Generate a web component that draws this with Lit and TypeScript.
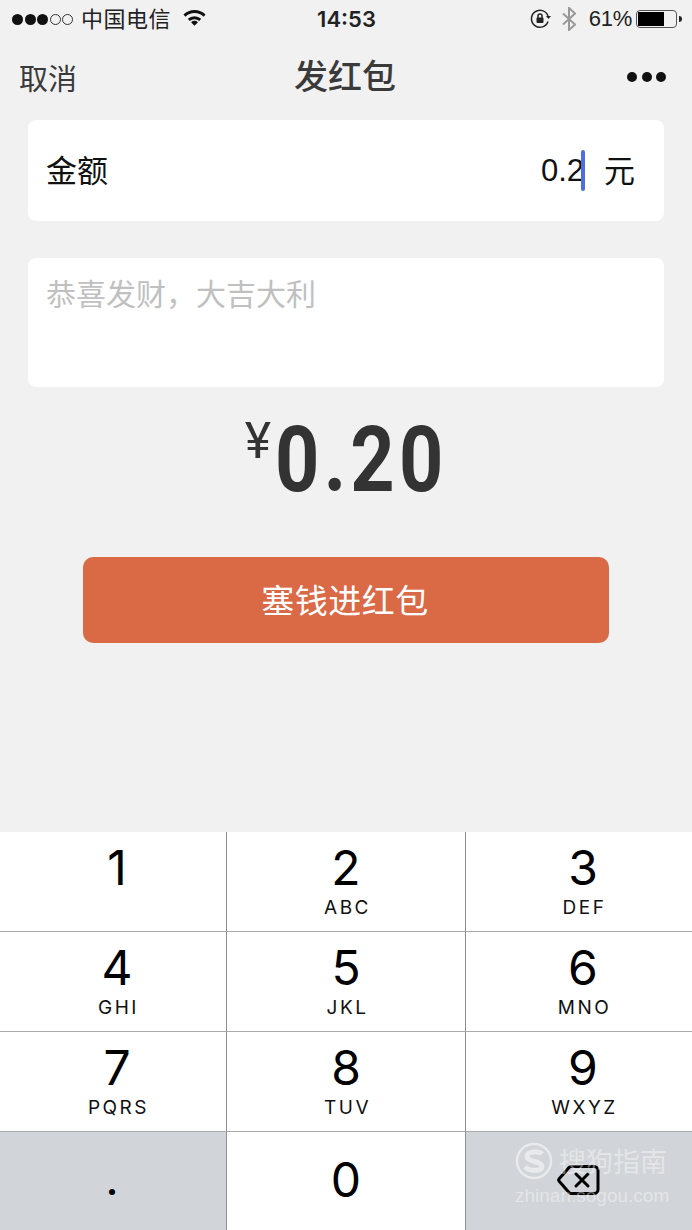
import { LitElement, css, html } from 'lit';
import { customElement } from 'lit/decorators.js';

const KEYS = [
	['1', ''], ['2', 'ABC'], ['3', 'DEF'],
	['4', 'GHI'], ['5', 'JKL'], ['6', 'MNO'],
	['7', 'PQRS'], ['8', 'TUV'], ['9', 'WXYZ'],
];

@customElement('app-root')
export class AppRoot extends LitElement {
	static styles = css`
		:host {
			display: flex;
			flex-direction: column;
			position: relative;
			width: 692px;
			height: 1230px;
			overflow: hidden;
			background: #f1f1f2;
			color: #000;
			font-family: "Liberation Sans", "Noto Sans CJK SC", sans-serif;
		}
		.status {
			display: flex;
			align-items: center;
			height: 38px;
			padding: 0 10px 0 12px;
			font-size: 23px;
			color: #222;
			position: relative;
		}
		.dots { display: flex; gap: 1.500px; margin-right: 8px; }
		.dot { width: 11px; height: 11px; border-radius: 50%; background: #111; box-sizing: border-box; }
		.dot.off { background: none; border: 1px solid #333; }
		.carrier { font-family: "Noto Sans CJK SC", sans-serif; font-size: 22px; letter-spacing: 0.5px; margin: 0 12px 4px 0; }
		.wifi { margin-bottom: 2px; }
		.time { position: absolute; left: 0; right: 0; text-align: center; font-family: Inter, sans-serif; font-weight: 600; font-size: 22px; padding-left: 1px; }
		.status-right { margin-left: auto; display: flex; align-items: center; gap: 10px; }
		.pct { font-size: 22px; margin: 0 -6px 0 3px; letter-spacing: -0.3px; }
		.nav {
			display: flex;
			align-items: center;
			justify-content: space-between;
			height: 82px;
			padding: 0 26px 4px 19px;
			box-sizing: border-box;
			position: relative;
			font-family: "Noto Sans CJK SC", sans-serif;
			color: #3a3a3a;
		}
		.cancel { font-size: 29px; }
		.title { position: absolute; left: 0; right: 2px; top: 12px; text-align: center; font-size: 34px; font-weight: 500; line-height: 50px; }
		.more { display: flex; gap: 4.500px; }
		.more i { width: 10px; height: 10px; border-radius: 50%; background: #111; }
		.content { display: flex; flex-direction: column; padding: 0 28px; font-family: "Noto Sans CJK SC", sans-serif; }
		.card { background: #fff; border-radius: 8px; }
		.amount-row {
			display: flex;
			align-items: center;
			height: 101px;
			padding: 0 29px 4px 18px;
			box-sizing: border-box;
			font-size: 31px;
			color: #111;
		}
		.value { margin-left: auto; display: flex; align-items: center; margin-bottom: -4px; font-family: "Liberation Sans", sans-serif; font-size: 31px; }
		.caret { width: 4px; height: 41px; border-radius: 2px; background: #4f6fdc; margin: 0 19px 0 -3px; }
		.memo {
			height: 129px;
			margin-top: 37px;
			padding: 12px 18px;
			box-sizing: border-box;
			font-size: 30px;
			line-height: 44px;
			color: #c0c0c0;
		}
		.total {
			display: flex;
			justify-content: center;
			margin-top: 24px;
			height: 98px;
			padding-right: 6px;
			color: #333;
			font-family: Roboto, sans-serif;
			font-weight: 700;
		}
		.yen { font-size: 50px; line-height: 60px; font-weight: 400; margin-right: 4px; }
		.sum { font-size: 91px; line-height: 99px; letter-spacing: 5px; transform: scaleX(0.85); transform-origin: left; width: 166px; }
		.pay {
			align-self: center;
			width: 526px;
			height: 86px;
			margin-top: 48px;
			padding: 0 2px 2px 0;
			box-sizing: border-box;
			border-radius: 10px;
			background: #da6946;
			color: #fff;
			display: flex;
			align-items: center;
			justify-content: center;
			font-size: 33px;
			letter-spacing: 0.5px;
		}
		.pad {
			margin-top: auto;
			display: grid;
			grid-template-columns: 227px 239px 226px;
			grid-template-rows: 99px 100px 100px 99px;
			background: #fff;
		}
		.key {
			display: flex;
			flex-direction: column;
			align-items: center;
			border-top: 1px solid #a9abac;
			border-right: 1px solid #8f9092;
			box-sizing: border-box;
			font-family: Inter, sans-serif;
			color: #000;
		}
		.key:nth-child(-n+3) { border-top: 0; }
		.key:nth-child(3n) { border-right: 0; }
		.key:nth-child(3n+1), .key:nth-child(3n) { padding-left: 8px; }
		.num { font-size: 48px; line-height: 56px; margin-top: 8px; }
		.letters { font-size: 19px; line-height: 22px; letter-spacing: 2.500px; margin: 1px 0 0 3px; color: #111; }
		.grey { background: #d1d4d8; }
		.key.dotkey { justify-content: center; font-size: 36px; font-weight: 700; padding: 2px 2px 0 0; }
		.zero { justify-content: center; padding-bottom: 2px; }
		.zero .num { margin-top: 0; }
		.key.back { justify-content: center; padding: 0; }
		.back svg { margin: 0 0 2px -2px; }
		.mark {
			position: absolute;
			left: 515px;
			top: 1141px;
			color: rgba(255, 255, 255, 0.42);
			font-family: "Noto Sans CJK SC", sans-serif;
		}
		.mark-top { display: flex; align-items: center; gap: 6px; font-size: 27px; line-height: 40px; }
		.mark-url { font-family: "Liberation Sans", sans-serif; font-size: 19px; line-height: 20px; margin-top: 5px; }
	`;

	render() {
		return html`
			<div class="status">
				<div class="dots">
					<i class="dot"></i><i class="dot"></i><i class="dot"></i><i class="dot off"></i><i class="dot off"></i>
				</div>
				<span class="carrier">中国电信</span>
				<svg class="wifi" width="23" height="18" viewBox="0 0 24 18" fill="none" stroke="#111" stroke-width="3">
					<path d="M1.500 6.500a15 15 0 0 1 21 0"/>
					<path d="M6 11a9 9 0 0 1 12 0"/>
					<path d="M12 17l-3.600-3.600a5 5 0 0 1 7.200 0z" fill="#111" stroke="none"/>
				</svg>
				<span class="time">14:53</span>
				<div class="status-right">
					<svg width="22" height="20" viewBox="0 0 22 20" fill="none" stroke="#222" stroke-width="1.500">
						<path d="M18 12.500A8.500 8.500 0 1 1 18 7"/>
						<path d="M16 7h5l-2.500 3z" fill="#222" stroke="none"/>
						<rect x="6.500" y="8.500" width="7" height="5.500" rx="1" fill="#222" stroke="none"/>
						<path d="M8 9V7a2 2 0 0 1 4 0v2"/>
					</svg>
					<svg width="14" height="24" viewBox="0 0 14 24" fill="none" stroke="#999" stroke-width="2">
						<path d="M1 6.500l12 11-6 5.500V1l6 5.500-12 11"/>
					</svg>
					<span class="pct">61%</span>
					<svg width="46" height="20" viewBox="0 0 46 20">
						<rect x="0.500" y="1.500" width="40" height="17" rx="3.500" fill="none" stroke="#555"/>
						<rect x="2" y="3" width="26" height="14" fill="#000"/>
						<path d="M43 7a3 3 0 0 1 0 6z" fill="#222"/>
					</svg>
				</div>
			</div>
			<div class="nav">
				<span class="cancel">取消</span>
				<span class="title">发红包</span>
				<span class="more"><i></i><i></i><i></i></span>
			</div>
			<div class="content">
				<div class="card amount-row">
					<span>金额</span>
					<span class="value">0.2<i class="caret"></i></span>
					<span>元</span>
				</div>
				<div class="card memo">恭喜发财，大吉大利</div>
				<div class="total">
					<span class="yen">¥</span>
					<span class="sum">0.20</span>
				</div>
				<div class="pay">塞钱进红包</div>
			</div>
			<div class="pad">
				${KEYS.map(([n, l]) => html`
					<div class="key"><span class="num">${n}</span><span class="letters">${l}</span></div>
				`)}
				<div class="key grey dotkey">.</div>
				<div class="key zero"><span class="num">0</span></div>
				<div class="key grey back">
					<svg width="44" height="32" viewBox="0 0 44 32" fill="none" stroke="#000" stroke-width="3" stroke-linejoin="round">
						<path d="M15 2.500h23a4 4 0 0 1 4 4v19a4 4 0 0 1-4 4H15a3 3 0 0 1-2-1L3 17a1.500 1.500 0 0 1 0-2L13 3.500a3 3 0 0 1 2-1z"/>
						<path d="M20 10l12 12M32 10L20 22" stroke-linecap="round"/>
					</svg>
				</div>
			</div>
			<div class="mark">
				<div class="mark-top">
					<svg width="38" height="38" viewBox="0 0 38 38" fill="none" stroke="rgba(255,255,255,0.5)">
						<circle cx="19" cy="19" r="17" stroke-width="2.500"/>
						<path d="M27 12c-3-3-15-3-15 2.500S27 19 27 24.500 14 29 10 25" stroke-width="5"/>
					</svg>
					<span>搜狗指南</span>
				</div>
				<div class="mark-url">zhinan.sogou.com</div>
			</div>
		`;
	}
}
